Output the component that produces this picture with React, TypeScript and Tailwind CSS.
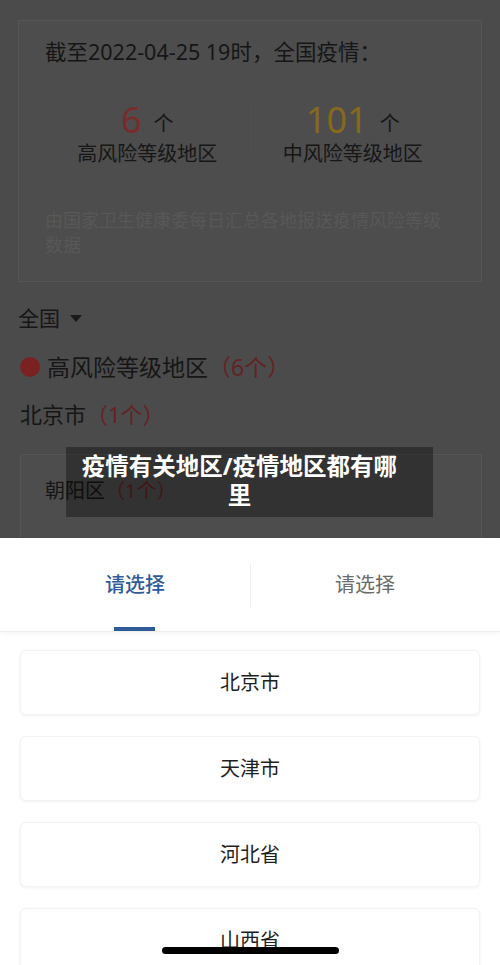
import { useState } from 'react';

const provinces = ['北京市', '天津市', '河北省', '山西省'];

export default function App() {
  const [tab, setTab] = useState(0);

  return (
    <div
      className="relative w-[500px] h-[965px] overflow-hidden bg-white"
      style={{ fontFamily: '"Noto Sans", "Noto Sans CJK SC", sans-serif' }}
    >
      {/* Page behind the sheet, dimmed */}
      <div className="h-[538px] bg-[#4b4b4b] px-[18px] pt-[20px]">
        <div className="h-[262px] border border-[#555] bg-[#4d4d4d] px-[26px] pt-[16px]">
          <div className="text-[21.5px] text-[#161616] leading-[30px]">截至2022-04-25 19时，全国疫情：</div>
          <div className="mt-[34px] flex">
            <div className="flex-1 flex flex-col items-center">
              <div className="flex items-end gap-[12px] h-[38px]">
                <span className="text-[36px] leading-[38px] text-[#7a2b2b]">6</span>
                <span className="text-[20px] leading-[30px] text-[#161616]">个</span>
              </div>
              <div className="text-[20px] leading-[30px] text-[#161616]">高风险等级地区</div>
            </div>
            <div className="w-px h-[50px] bg-[#505050] mt-[4px]" />
            <div className="flex-1 flex flex-col items-center">
              <div className="flex items-end gap-[12px] h-[38px]">
                <span className="text-[36px] leading-[38px] text-[#86691c]">101</span>
                <span className="text-[20px] leading-[30px] text-[#161616]">个</span>
              </div>
              <div className="text-[20px] leading-[30px] text-[#161616]">中风险等级地区</div>
            </div>
          </div>
          <div className="mt-[39px] text-[18px] leading-[25px] text-[#585858]">
            由国家卫生健康委每日汇总各地报送疫情风险等级数据
          </div>
        </div>

        <div className="mt-[20px] flex items-center gap-[10px] text-[21px] leading-[32px] text-[#161616]">
          <span>全国</span>
          <span className="w-0 h-0 border-l-[6px] border-r-[6px] border-t-[7px] border-l-transparent border-r-transparent border-t-[#1a1a1a]" />
        </div>
        <div className="mt-[17px] flex items-center text-[23px] leading-[32px]">
          <span className="w-[20px] h-[20px] rounded-full bg-[#7a2222] mr-[7px] ml-[2px]" />
          <span className="text-[#161616]">高风险等级地区</span>
          <span className="text-[#632323]">（6个）</span>
        </div>
        <div className="mt-[15px] flex items-center text-[22px] leading-[32px]">
          <span className="text-[#161616] ml-[2px]">北京市</span>
          <span className="text-[#632323]">（1个）</span>
        </div>
        <div className="mt-[24px] ml-[2px] h-[120px] border border-[#555] bg-[#4d4d4d] px-[24px] pt-[21px] text-[20px] leading-[30px]">
          <span className="text-[#161616]">朝阳区</span>
          <span className="text-[#632323]">（1个）</span>
        </div>
      </div>

      {/* Title caption */}
      <div className="absolute left-[66px] top-[447px] w-[367px] h-[70px] bg-black/35 pl-[10px] pr-[30px] pt-[5px] text-center text-[23.5px] leading-[29px] font-bold text-white">
        疫情有关地区/疫情地区都有哪里
      </div>

      {/* Region picker sheet */}
      <div className="absolute left-0 top-[538px] w-[500px] h-[427px] bg-white">
        <div className="relative flex h-[94px] px-[20px] border-b border-[#eee] shadow-[0_2px_4px_rgba(0,0,0,0.04)]">
          {[0, 1].map((i) => (
            <button
              key={i}
              onClick={() => setTab(i)}
              className={`flex-1 flex justify-center pt-[32px] text-[20px] leading-[30px] ${
                tab === i ? 'text-[#2f5b98] font-medium' : 'text-[#6a6a6a]'
              }`}
            >
              请选择
            </button>
          ))}
          <div className="absolute left-[250px] top-[25px] w-px h-[44px] bg-[#f0f0f0]" />
          <div
            className={`absolute top-[89px] w-[41px] h-[4px] bg-[#2f5b98] ${tab === 0 ? 'left-[114px]' : 'left-[344px]'}`}
          />
        </div>
        <div className="flex flex-col gap-[21px] px-[20px] pt-[18px]">
          {provinces.map((p) => (
            <div
              key={p}
              className="h-[65px] shrink-0 flex items-center justify-center rounded-[6px] bg-white border border-[#f3f3f3] shadow-[0_1px_3px_rgba(0,0,0,0.06)] text-[20px] text-[#1e1e1e]"
            >
              {p}
            </div>
          ))}
        </div>
      </div>

      {/* Home indicator */}
      <div className="absolute left-[162px] top-[947px] w-[177px] h-[7px] rounded-full bg-black" />
    </div>
  );
}
